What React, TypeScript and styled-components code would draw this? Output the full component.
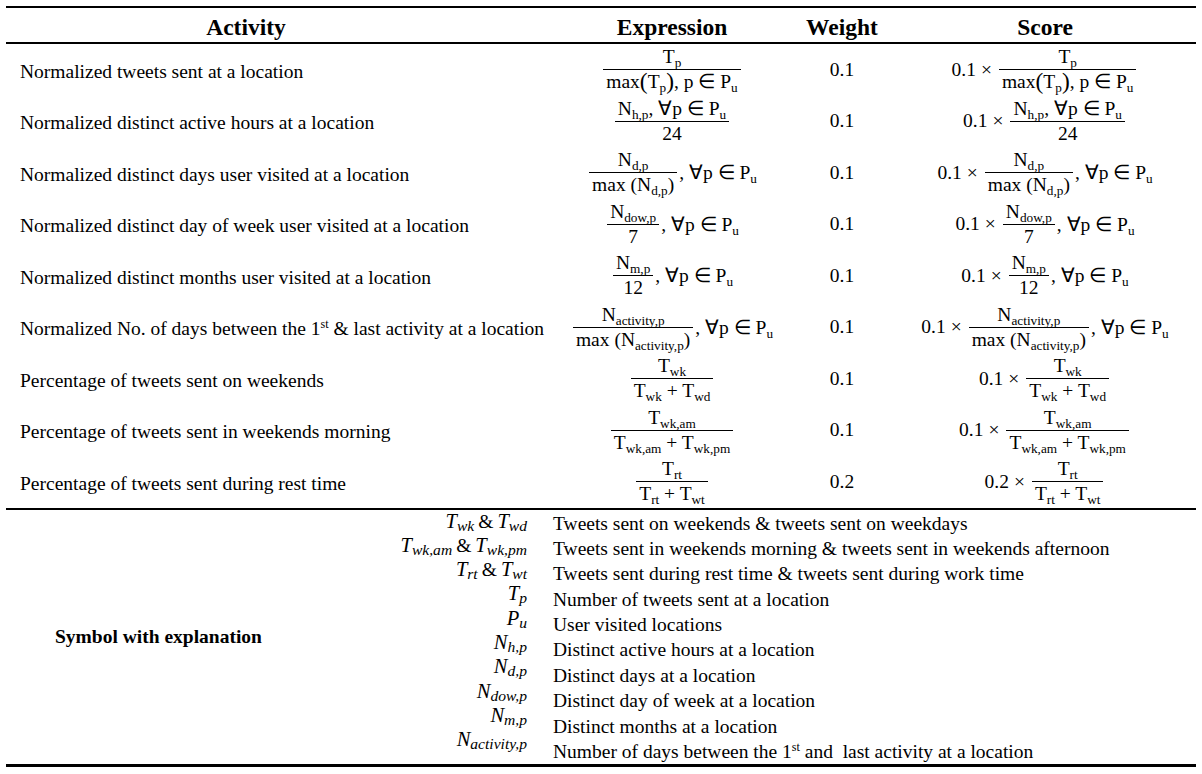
import React from "react";
import styled, { createGlobalStyle } from "styled-components";

const Global = createGlobalStyle`
  html, body { margin: 0; padding: 0; background: #ffffff; }
  body { font-family: "Liberation Serif", "Times New Roman", serif; color: #000; }
`;

const COLS = "564px 204px 136px 286px";

const Page = styled.div`
  width: 1190px;
  margin: 6px 0 0 6px;
`;

const Table = styled.div`
  border-top: 2px solid #000;
`;

const HeaderRow = styled.div`
  display: grid;
  grid-template-columns: ${COLS};
  height: 34px;
  align-items: center;
  border-bottom: 2px solid #000;
`;

const HeadCell = styled.div<{ $padRight?: number }>`
  font-family: "Liberation Serif", serif;
  font-weight: 700;
  font-size: 23.5px;
  line-height: 34px;
  padding-top: 2px;
  text-align: center;
  padding-right: ${(p) => p.$padRight ?? 0}px;
`;

const Body = styled.div`
  border-bottom: 2px solid #000;
`;

const Row = styled.div`
  display: grid;
  grid-template-columns: ${COLS};
  height: 51.5px;
  align-items: center;
`;

const ActivityCell = styled.div`
  padding: 4px 0 0 14px;
  font-size: 19.5px;
  white-space: nowrap;
`;

const MathCell = styled.div<{ $padRight?: number }>`
  display: flex;
  justify-content: center;
  padding-right: ${(p) => p.$padRight ?? 0}px;
  white-space: nowrap;
`;

const MathLine = styled.span`
  display: inline-flex;
  align-items: center;
  font-family: "Liberation Serif", serif;
  font-size: 19.5px;
  white-space: nowrap;
`;

const Frac = styled.span`
  display: inline-flex;
  flex-direction: column;
  align-items: stretch;
  margin: 0 2px;
`;

const Num = styled.span`
  text-align: center;
  line-height: 22px;
  padding: 0 3px 1px;
`;

const Den = styled.span`
  text-align: center;
  line-height: 22px;
  padding: 1px 3px 0;
  border-top: 1.3px solid #000;
`;

const Sub = styled.sub<{ $scale?: number; $drop?: number }>`
  font-size: ${(p) => p.$scale ?? 0.68}em;
  vertical-align: ${(p) => p.$drop ?? -0.3}em;
  line-height: 0;
`;

const Sup = styled.sup`
  font-size: 0.62em;
  vertical-align: 0.55em;
  line-height: 0;
`;

const Paren = styled.span`
  font-size: 1.2em;
  line-height: 0;
  position: relative;
  top: 0.03em;
`;

const Op = styled.span`
  padding: 0 5px;
`;

const Legend = styled.div`
  display: grid;
  grid-template-columns: 264px 231px 1fr;
  column-gap: 26px;
  height: 254px;
  border-bottom: 3px solid #000;
`;

const LegendLabel = styled.div`
  align-self: center;
  padding: 0 0 0 49px;
  font-weight: 700;
  font-size: 19.5px;
  white-space: nowrap;
`;

const SymbolList = styled.div`
  display: flex;
  flex-direction: column;
  align-items: flex-end;
`;

const Symbol = styled.div`
  height: 24.3px;
  line-height: 22px;
  font-size: 20.5px;
  font-style: italic;
  white-space: nowrap;
`;

const Amp = styled.span`
  font-style: normal;
  font-size: 19.5px;
  padding: 0 4px;
`;

const ExplainList = styled.div`
  display: flex;
  flex-direction: column;
  padding-top: 1px;
`;

const Explain = styled.div`
  height: 25.4px;
  line-height: 25.4px;
  font-size: 19.5px;
  white-space: nowrap;
`;

const S = ({ b, s }: { b: string; s: string }) => (
  <span>
    {b}
    <Sub>{s}</Sub>
  </span>
);

const ForAll = () => (
  <span>
    ,&nbsp;∀p ∈ <S b="P" s="u" />
  </span>
);

type RowData = {
  activity: React.ReactNode;
  weight: string;
  expr: React.ReactNode;
};

const rows: RowData[] = [
  {
    activity: "Normalized tweets sent at a location",
    weight: "0.1",
    expr: (
      <Frac>
        <Num>
          <S b="T" s="p" />
        </Num>
        <Den>
          max<Paren>(</Paren>
          <S b="T" s="p" />
          <Paren>)</Paren>, p ∈ <S b="P" s="u" />
        </Den>
      </Frac>
    ),
  },
  {
    activity: "Normalized distinct active hours at a location",
    weight: "0.1",
    expr: (
      <Frac>
        <Num>
          <S b="N" s="h,p" />, ∀p ∈ <S b="P" s="u" />
        </Num>
        <Den>24</Den>
      </Frac>
    ),
  },
  {
    activity: "Normalized distinct days user visited at a location",
    weight: "0.1",
    expr: (
      <>
        <Frac>
          <Num>
            <S b="N" s="d,p" />
          </Num>
          <Den>
            max (<S b="N" s="d,p" />)
          </Den>
        </Frac>
        <ForAll />
      </>
    ),
  },
  {
    activity: "Normalized distinct day of week user visited at a location",
    weight: "0.1",
    expr: (
      <>
        <Frac>
          <Num>
            <S b="N" s="dow,p" />
          </Num>
          <Den>7</Den>
        </Frac>
        <ForAll />
      </>
    ),
  },
  {
    activity: "Normalized distinct months user visited at a location",
    weight: "0.1",
    expr: (
      <>
        <Frac>
          <Num>
            <S b="N" s="m,p" />
          </Num>
          <Den>12</Den>
        </Frac>
        <ForAll />
      </>
    ),
  },
  {
    activity: (
      <>
        Normalized No. of days between the 1<Sup>st</Sup> &amp; last activity at a location
      </>
    ),
    weight: "0.1",
    expr: (
      <>
        <Frac>
          <Num>
            <S b="N" s="activity,p" />
          </Num>
          <Den>
            max (<S b="N" s="activity,p" />)
          </Den>
        </Frac>
        <ForAll />
      </>
    ),
  },
  {
    activity: "Percentage of tweets sent on weekends",
    weight: "0.1",
    expr: (
      <Frac>
        <Num>
          <S b="T" s="wk" />
        </Num>
        <Den>
          <S b="T" s="wk" /> + <S b="T" s="wd" />
        </Den>
      </Frac>
    ),
  },
  {
    activity: "Percentage of tweets sent in weekends morning",
    weight: "0.1",
    expr: (
      <Frac>
        <Num>
          <S b="T" s="wk,am" />
        </Num>
        <Den>
          <S b="T" s="wk,am" /> + <S b="T" s="wk,pm" />
        </Den>
      </Frac>
    ),
  },
  {
    activity: "Percentage of tweets sent during rest time",
    weight: "0.2",
    expr: (
      <Frac>
        <Num>
          <S b="T" s="rt" />
        </Num>
        <Den>
          <S b="T" s="rt" /> + <S b="T" s="wt" />
        </Den>
      </Frac>
    ),
  },
];

const symbols: { base: string; sub: string; base2?: string; sub2?: string }[] = [
  { base: "T", sub: "wk", base2: "T", sub2: "wd" },
  { base: "T", sub: "wk,am", base2: "T", sub2: "wk,pm" },
  { base: "T", sub: "rt", base2: "T", sub2: "wt" },
  { base: "T", sub: "p" },
  { base: "P", sub: "u" },
  { base: "N", sub: "h,p" },
  { base: "N", sub: "d,p" },
  { base: "N", sub: "dow,p" },
  { base: "N", sub: "m,p" },
  { base: "N", sub: "activity,p" },
];

const explanations: React.ReactNode[] = [
  "Tweets sent on weekends & tweets sent on weekdays",
  "Tweets sent in weekends morning & tweets sent in weekends afternoon",
  "Tweets sent during rest time & tweets sent during work time",
  "Number of tweets sent at a location",
  "User visited locations",
  "Distinct active hours at a location",
  "Distinct days at a location",
  "Distinct day of week at a location",
  "Distinct months at a location",
  <>
    Number of days between the 1<Sup>st</Sup> and&nbsp; last activity at a location
  </>,
];

export default function App() {
  return (
    <>
      <Global />
      <Page>
        <Table>
          <HeaderRow>
            <HeadCell $padRight={84}>Activity</HeadCell>
            <HeadCell>Expression</HeadCell>
            <HeadCell>Weight</HeadCell>
            <HeadCell $padRight={16}>Score</HeadCell>
          </HeaderRow>
          <Body>
            {rows.map((r, i) => (
              <Row key={i}>
                <ActivityCell>{r.activity}</ActivityCell>
                <MathCell>
                  <MathLine>{r.expr}</MathLine>
                </MathCell>
                <MathCell>
                  <MathLine>{r.weight}</MathLine>
                </MathCell>
                <MathCell $padRight={16}>
                  <MathLine>
                    {r.weight}
                    <Op>×</Op>
                    {r.expr}
                  </MathLine>
                </MathCell>
              </Row>
            ))}
          </Body>
        </Table>
        <Legend>
          <LegendLabel>Symbol with explanation</LegendLabel>
          <SymbolList>
            {symbols.map((s, i) => (
              <Symbol key={i}>
                {s.base}
                <Sub $scale={0.76} $drop={-0.2}>
                  {s.sub}
                </Sub>
                {s.base2 && (
                  <>
                    <Amp>&amp;</Amp>
                    {s.base2}
                    <Sub $scale={0.76} $drop={-0.2}>
                      {s.sub2}
                    </Sub>
                  </>
                )}
              </Symbol>
            ))}
          </SymbolList>
          <ExplainList>
            {explanations.map((e, i) => (
              <Explain key={i}>{e}</Explain>
            ))}
          </ExplainList>
        </Legend>
      </Page>
    </>
  );
}
